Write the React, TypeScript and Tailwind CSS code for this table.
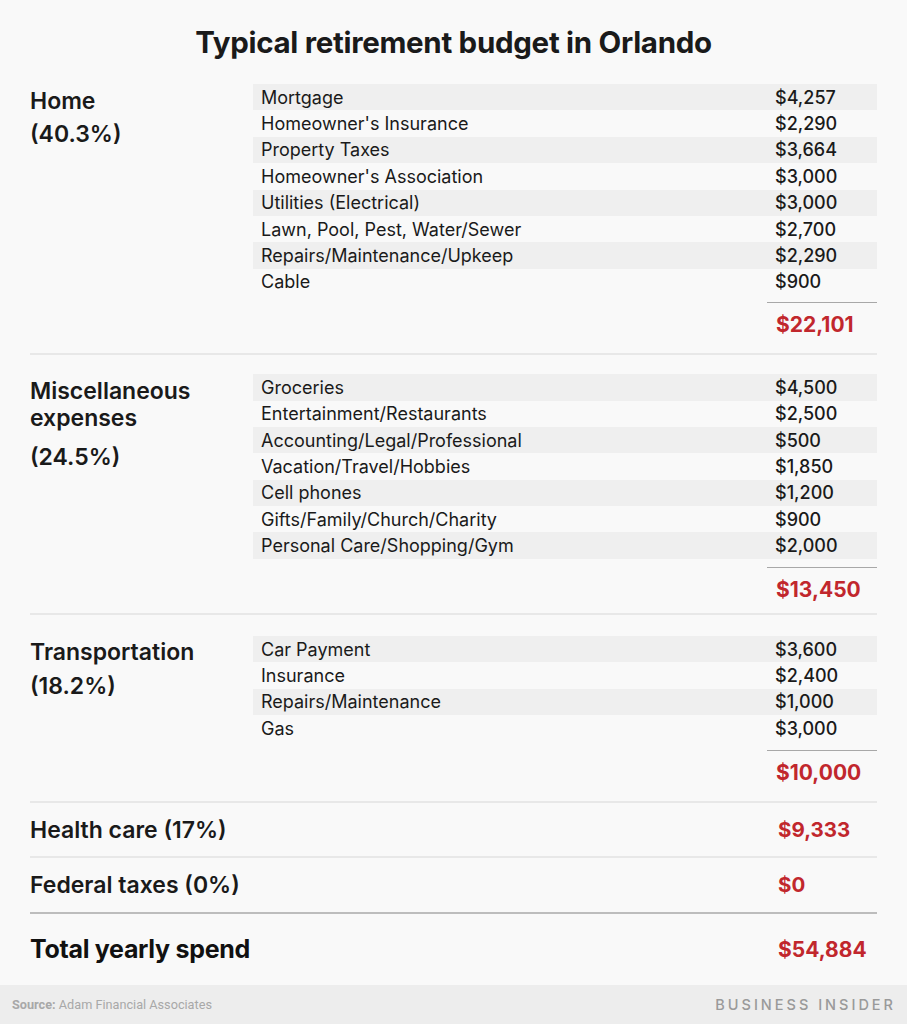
import React from "react";

type Item = [string, string];

const home: Item[] = [
  ["Mortgage", "$4,257"],
  ["Homeowner's Insurance", "$2,290"],
  ["Property Taxes", "$3,664"],
  ["Homeowner's Association", "$3,000"],
  ["Utilities (Electrical)", "$3,000"],
  ["Lawn, Pool, Pest, Water/Sewer", "$2,700"],
  ["Repairs/Maintenance/Upkeep", "$2,290"],
  ["Cable", "$900"],
];

const misc: Item[] = [
  ["Groceries", "$4,500"],
  ["Entertainment/Restaurants", "$2,500"],
  ["Accounting/Legal/Professional", "$500"],
  ["Vacation/Travel/Hobbies", "$1,850"],
  ["Cell phones", "$1,200"],
  ["Gifts/Family/Church/Charity", "$900"],
  ["Personal Care/Shopping/Gym", "$2,000"],
];

const transport: Item[] = [
  ["Car Payment", "$3,600"],
  ["Insurance", "$2,400"],
  ["Repairs/Maintenance", "$1,000"],
  ["Gas", "$3,000"],
];

function Rows({ items }: { items: Item[] }) {
  return (
    <div className="flex flex-col">
      {items.map(([name, val], i) => (
        <div
          key={name}
          className={`flex items-center h-[26.4px] text-[18px] text-[#1a1a1a] ${i % 2 === 0 ? "bg-[#efefef]" : ""}`}
        >
          <div className="pl-[8px] w-[522px]">{name}</div>
          <div className="font-medium">{val}</div>
        </div>
      ))}
    </div>
  );
}

function Section({
  label,
  pct,
  pctGap,
  items,
  total,
  pt,
  pb,
  lineGap,
}: {
  label: React.ReactNode;
  pct: string;
  pctGap: string;
  items: Item[];
  total: string;
  pt: string;
  pb: string;
  lineGap: string;
}) {
  return (
    <div className={`flex shrink-0 border-b-2 border-[#e8e8e8] ${pt} ${pb}`}>
      <div className="w-[223px] pt-[3.5px] text-[23px] font-semibold leading-[27px] text-[#1a1a1a]">
        <div>{label}</div>
        <div className={pctGap}>{pct}</div>
      </div>
      <div className="flex-1">
        <Rows items={items} />
        <div className={`flex justify-end ${lineGap}`}>
          <div className="w-[110px] border-t-[1.5px] border-[#a8a8a8] pt-[8px] pl-[9px] text-[21px] leading-[28px] font-bold text-[#c1272d]">
            {total}
          </div>
        </div>
      </div>
    </div>
  );
}

export default function App() {
  return (
    <div
      className="w-[907px] h-[1024px] bg-[#f9f9f9] flex flex-col"
      style={{ fontFamily: "Inter, 'Noto Sans', sans-serif" }}
    >
      <div className="shrink-0 text-center text-[29.5px] leading-[36px] font-bold text-[#1a1a1a] pt-[24px] h-[84px] tracking-[-0.3px]">
        Typical retirement budget in Orlando
      </div>
      <div className="px-[30px] flex flex-col shrink-0">
        <Section
          label="Home"
          pct="(40.3%)"
          pctGap="mt-[6px]"
          items={home}
          total="$22,101"
          pt="pt-0"
          pb="pb-[14px]"
          lineGap="mt-[7px]"
        />
        <Section
          label={
            <>
              Miscellaneous
              <br />
              expenses
            </>
          }
          pct="(24.5%)"
          pctGap="mt-[12px]"
          items={misc}
          total="$13,450"
          pt="pt-[19px]"
          pb="pb-[9px]"
          lineGap="mt-[8px]"
        />
        <Section
          label="Transportation"
          pct="(18.2%)"
          pctGap="mt-[7px]"
          items={transport}
          total="$10,000"
          pt="pt-[21px]"
          pb="pb-[14px]"
          lineGap="mt-[9px]"
        />
        <div className="flex shrink-0 items-center h-[55px] border-b-2 border-[#e8e8e8] text-[23px] font-semibold">
          <div className="w-[748px] text-[#1a1a1a]">Health care (17%)</div>
          <div className="font-bold text-[#c1272d] text-[20.5px]">$9,333</div>
        </div>
        <div className="flex shrink-0 items-center h-[56px] border-b-2 border-[#bdbdbd] text-[23px] font-semibold">
          <div className="w-[748px] text-[#1a1a1a]">Federal taxes (0%)</div>
          <div className="font-bold text-[#c1272d] text-[20.5px]">$0</div>
        </div>
        <div className="flex shrink-0 items-center h-[71px]">
          <div className="w-[748px] text-[25px] font-bold text-[#111] tracking-[-0.3px]">Total yearly spend</div>
          <div className="font-bold text-[#c1272d] text-[21px]">$54,884</div>
        </div>
      </div>
      <div className="mt-auto shrink-0 h-[39px] bg-[#ededed] flex items-center justify-between pl-[12px] pr-[11px]">
        <div
          className="text-[12.7px] text-[#a8a8a8]"
          style={{ fontFamily: "'Liberation Sans Narrow', 'Roboto', sans-serif" }}
        >
          <span className="font-bold">Source:</span> Adam Financial Associates
        </div>
        <div className="text-[14.5px] text-[#9a9a9a] tracking-[3px] font-medium">BUSINESS INSIDER</div>
      </div>
    </div>
  );
}
